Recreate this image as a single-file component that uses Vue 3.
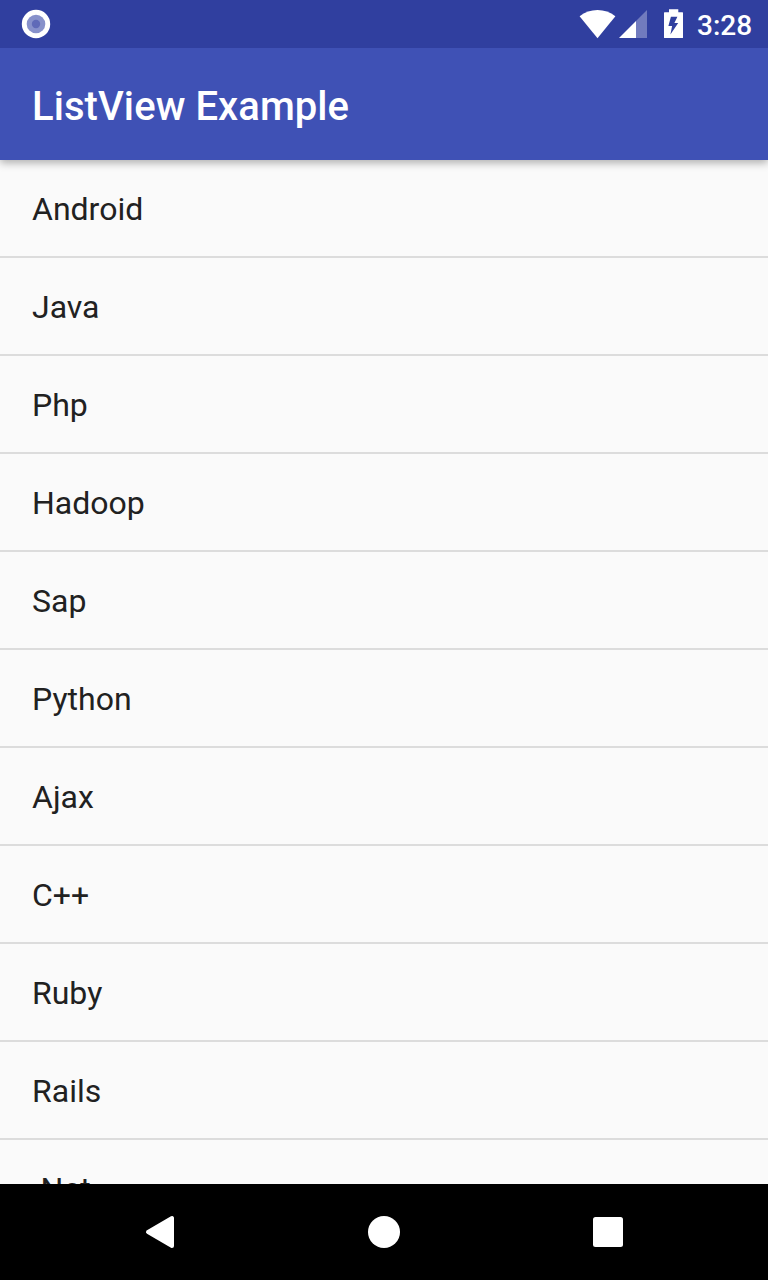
<script setup>
const items = ['Android', 'Java', 'Php', 'Hadoop', 'Sap', 'Python', 'Ajax', 'C++', 'Ruby', 'Rails', '.Net']
</script>

<template>
  <div class="screen">
    <header class="status">
      <svg class="record" width="30" height="30" viewBox="0 0 30 30">
        <circle cx="15" cy="15" r="14.2" fill="#fff" />
        <circle cx="15" cy="15" r="9.3" fill="#8791cb" />
        <circle cx="15" cy="15" r="4.2" fill="#5f6ab8" />
      </svg>
      <svg class="signals" width="106" height="48" viewBox="578 0 106 48">
        <path d="M579.6 16.2C589.7 8 605.3 8 615.4 16.2L597.5 38.2Z" fill="#fff" />
        <path d="M636 21V38H619Z" fill="#fff" />
        <path d="M647 10V38H636V21Z" fill="#717bbe" />
        <path
          fill="#fff"
          fill-rule="evenodd"
          d="M669 9.3H678.3V12.2H682.4Q683 12.2 683 12.8V37.4Q683 38 682.4 38H664.6Q664 38 664 37.4V12.8Q664 12.2 664.6 12.2H669ZM670.9 16.7L668.4 26H672.1L670.4 34.4L678.2 23H674.4L677.4 16.7Z"
        />
      </svg>
      <span class="clock">3:28</span>
    </header>
    <div class="toolbar"><h1>ListView Example</h1></div>
    <ul class="list">
      <li v-for="item in items" :key="item">{{ item }}</li>
    </ul>
    <nav class="navbar">
      <svg width="768" height="96" viewBox="0 0 768 96">
        <path d="M148 48L172 34V62Z" fill="#fff" stroke="#fff" stroke-width="4" stroke-linejoin="round" />
        <circle cx="384" cy="48" r="16" fill="#fff" />
        <rect x="593" y="33" width="30" height="30" rx="2.5" fill="#fff" />
      </svg>
    </nav>
  </div>
</template>

<style scoped>
.screen {
  display: flex;
  flex-direction: column;
  width: 768px;
  height: 1280px;
  overflow: hidden;
  background: #fafafa;
  font-family: Roboto, sans-serif;
}
.status {
  display: flex;
  flex: none;
  align-items: center;
  height: 48px;
  padding: 0 16px 0 21px;
  background: #303f9f;
}
.record {
  display: block;
}
.signals {
  display: block;
  margin-left: auto;
}
.clock {
  width: 55px;
  margin-left: 13px;
  padding-top: 4px;
  color: #fff;
  font-size: 28px;
  font-weight: 500;
  line-height: 34px;
  white-space: nowrap;
}
.toolbar {
  position: relative;
  z-index: 1;
  flex: none;
  height: 112px;
  padding: 0 32px;
  background: #3f51b5;
  box-shadow: 0 3px 8px rgba(0, 0, 0, 0.3);
  clip-path: inset(0 0 -20px 0);
}
h1 {
  margin: 0;
  padding-top: 3px;
  color: #fff;
  font-size: 40px;
  font-weight: 500;
  letter-spacing: 0.07px;
  line-height: 112px;
}
.list {
  flex: 1;
  min-height: 0;
  margin: 0;
  padding: 0;
  overflow: hidden;
  list-style: none;
}
li {
  box-sizing: border-box;
  height: 98px;
  padding: 1px 32px 0;
  border-bottom: 2px solid #dcdcdc;
  color: #212121;
  font-size: 32px;
  line-height: 96px;
}
.navbar {
  flex: none;
  height: 96px;
  background: #000;
}
.navbar svg {
  display: block;
}
</style>

<style>
body {
  margin: 0;
  overflow: hidden;
}
</style>
